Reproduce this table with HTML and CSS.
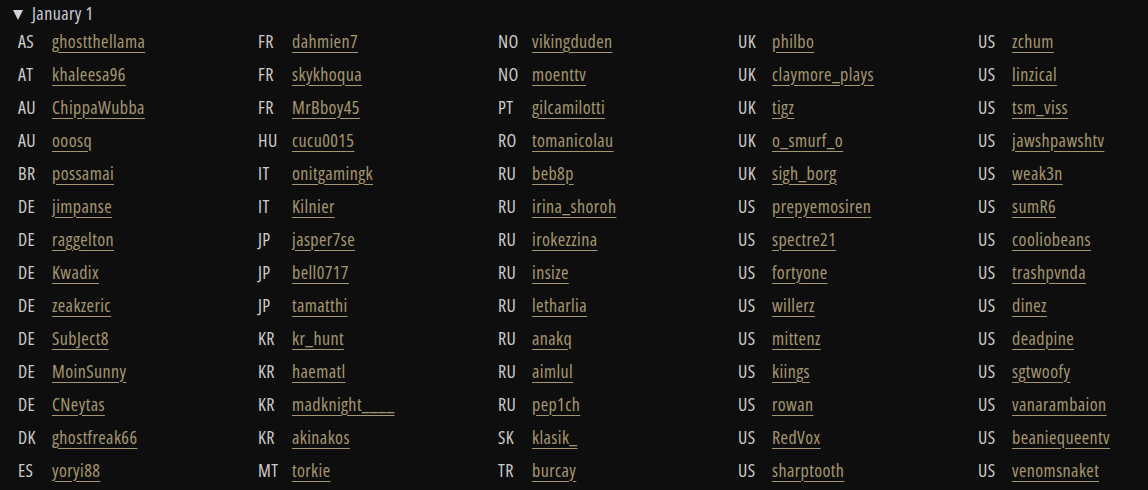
FILE: index.html
```html
<!DOCTYPE html>
<html lang="en">
<head>
    <meta charset="UTF-8">
    <title>Birthdays - January 1</title>
    <link rel="stylesheet" href="styles.css">
</head>
<body>
    <details class="day" open>
        <summary>January 1</summary>
        <ul class="players">
            <li><span class="cc">AS</span><a href="#">ghostthellama</a></li>
            <li><span class="cc">AT</span><a href="#">khaleesa96</a></li>
            <li><span class="cc">AU</span><a href="#">ChippaWubba</a></li>
            <li><span class="cc">AU</span><a href="#">ooosq</a></li>
            <li><span class="cc">BR</span><a href="#">possamai</a></li>
            <li><span class="cc">DE</span><a href="#">jimpanse</a></li>
            <li><span class="cc">DE</span><a href="#">raggelton</a></li>
            <li><span class="cc">DE</span><a href="#">Kwadix</a></li>
            <li><span class="cc">DE</span><a href="#">zeakzeric</a></li>
            <li><span class="cc">DE</span><a href="#">SubJect8</a></li>
            <li><span class="cc">DE</span><a href="#">MoinSunny</a></li>
            <li><span class="cc">DE</span><a href="#">CNeytas</a></li>
            <li><span class="cc">DK</span><a href="#">ghostfreak66</a></li>
            <li><span class="cc">ES</span><a href="#">yoryi88</a></li>

            <li><span class="cc">FR</span><a href="#">dahmien7</a></li>
            <li><span class="cc">FR</span><a href="#">skykhoqua</a></li>
            <li><span class="cc">FR</span><a href="#">MrBboy45</a></li>
            <li><span class="cc">HU</span><a href="#">cucu0015</a></li>
            <li><span class="cc">IT</span><a href="#">onitgamingk</a></li>
            <li><span class="cc">IT</span><a href="#">Kilnier</a></li>
            <li><span class="cc">JP</span><a href="#">jasper7se</a></li>
            <li><span class="cc">JP</span><a href="#">bell0717</a></li>
            <li><span class="cc">JP</span><a href="#">tamatthi</a></li>
            <li><span class="cc">KR</span><a href="#">kr_hunt</a></li>
            <li><span class="cc">KR</span><a href="#">haematl</a></li>
            <li><span class="cc">KR</span><a href="#">madknight____</a></li>
            <li><span class="cc">KR</span><a href="#">akinakos</a></li>
            <li><span class="cc">MT</span><a href="#">torkie</a></li>

            <li><span class="cc">NO</span><a href="#">vikingduden</a></li>
            <li><span class="cc">NO</span><a href="#">moenttv</a></li>
            <li><span class="cc">PT</span><a href="#">gilcamilotti</a></li>
            <li><span class="cc">RO</span><a href="#">tomanicolau</a></li>
            <li><span class="cc">RU</span><a href="#">beb8p</a></li>
            <li><span class="cc">RU</span><a href="#">irina_shoroh</a></li>
            <li><span class="cc">RU</span><a href="#">irokezzina</a></li>
            <li><span class="cc">RU</span><a href="#">insize</a></li>
            <li><span class="cc">RU</span><a href="#">letharlia</a></li>
            <li><span class="cc">RU</span><a href="#">anakq</a></li>
            <li><span class="cc">RU</span><a href="#">aimlul</a></li>
            <li><span class="cc">RU</span><a href="#">pep1ch</a></li>
            <li><span class="cc">SK</span><a href="#">klasik_</a></li>
            <li><span class="cc">TR</span><a href="#">burcay</a></li>

            <li><span class="cc">UK</span><a href="#">philbo</a></li>
            <li><span class="cc">UK</span><a href="#">claymore_plays</a></li>
            <li><span class="cc">UK</span><a href="#">tigz</a></li>
            <li><span class="cc">UK</span><a href="#">o_smurf_o</a></li>
            <li><span class="cc">UK</span><a href="#">sigh_borg</a></li>
            <li><span class="cc">US</span><a href="#">prepyemosiren</a></li>
            <li><span class="cc">US</span><a href="#">spectre21</a></li>
            <li><span class="cc">US</span><a href="#">fortyone</a></li>
            <li><span class="cc">US</span><a href="#">willerz</a></li>
            <li><span class="cc">US</span><a href="#">mittenz</a></li>
            <li><span class="cc">US</span><a href="#">kiings</a></li>
            <li><span class="cc">US</span><a href="#">rowan</a></li>
            <li><span class="cc">US</span><a href="#">RedVox</a></li>
            <li><span class="cc">US</span><a href="#">sharptooth</a></li>

            <li><span class="cc">US</span><a href="#">zchum</a></li>
            <li><span class="cc">US</span><a href="#">linzical</a></li>
            <li><span class="cc">US</span><a href="#">tsm_viss</a></li>
            <li><span class="cc">US</span><a href="#">jawshpawshtv</a></li>
            <li><span class="cc">US</span><a href="#">weak3n</a></li>
            <li><span class="cc">US</span><a href="#">sumR6</a></li>
            <li><span class="cc">US</span><a href="#">cooliobeans</a></li>
            <li><span class="cc">US</span><a href="#">trashpvnda</a></li>
            <li><span class="cc">US</span><a href="#">dinez</a></li>
            <li><span class="cc">US</span><a href="#">deadpine</a></li>
            <li><span class="cc">US</span><a href="#">sgtwoofy</a></li>
            <li><span class="cc">US</span><a href="#">vanarambaion</a></li>
            <li><span class="cc">US</span><a href="#">beaniequeentv</a></li>
            <li><span class="cc">US</span><a href="#">venomsnaket</a></li>
        </ul>
    </details>
</body>
</html>
```

FILE: styles.css
```css
body {
    margin: 0;
    padding: 0;
    background-color: #0f0e0e;
    font-family: "Open Sans", "DejaVu Sans", sans-serif;
    font-stretch: 75%;
    color: #c8c8c8;
    overflow: hidden;
}

.day summary {
    list-style: none;
    cursor: pointer;
    padding: 2px 0 0 13px;
    height: 22px;
    line-height: 22px;
    font-size: 18px;
    letter-spacing: 0.4px;
    color: #c9ccd6;
}

.day summary::-webkit-details-marker {
    display: none;
}

.day summary::before {
    content: "";
    display: inline-block;
    width: 0;
    height: 0;
    border-left: 5px solid transparent;
    border-right: 5px solid transparent;
    border-top: 10px solid #d0d2da;
    margin-right: 9px;
    vertical-align: 0;
}

.players {
    list-style: none;
    margin: 0;
    padding: 0 0 0 18px;
    display: grid;
    grid-auto-flow: column;
    grid-template-rows: repeat(14, 33px);
    grid-template-columns: repeat(4, 240px) 1fr;
}

.players li {
    display: flex;
    align-items: center;
    font-size: 18px;
    letter-spacing: 0.4px;
}

.cc {
    width: 34px;
    color: #cbcbcb;
}

.players a {
    color: #a49670;
    text-decoration: underline;
    text-decoration-thickness: 1px;
    text-underline-offset: 4px;
}
```
